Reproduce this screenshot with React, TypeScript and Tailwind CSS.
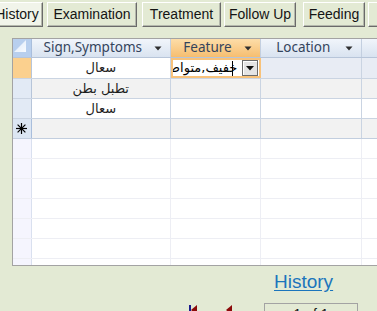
import React from 'react';

const tabs = [
  { label: 'History', w: 'w-[52px]', ml: 'ml-[-9px]', active: true },
  { label: 'Examination', w: 'w-[90px]', ml: 'ml-[4px]', active: false },
  { label: 'Treatment', w: 'w-[79px]', ml: 'ml-[5px]', active: false },
  { label: 'Follow Up', w: 'w-[72px]', ml: 'ml-[3px]', active: false },
  { label: 'Feeding', w: 'w-[62px]', ml: 'ml-[7px]', active: false },
  { label: 'Groups', w: 'w-[70px]', ml: 'ml-[3px]', active: false },
];

const rows = [
  { sign: 'سعال', bg: 'bg-white', sel: 'bg-[#FBD08E]', current: true },
  { sign: 'تطبل بطن', bg: 'bg-[#F2F2F2]', sel: 'bg-[#E2EAF5]', current: false },
  { sign: 'سعال', bg: 'bg-white', sel: 'bg-[#E2EAF5]', current: false },
];

function Arrow() {
  return (
    <svg width="8" height="5" viewBox="0 0 8 5" className="shrink-0">
      <path d="M0.5 0.5 H7.5 L4 4.5 Z" fill="#2E2E2E" />
    </svg>
  );
}

function HeaderCell({ label, w, active }: { label: string; w: string; active?: boolean }) {
  return (
    <div
      className={`${w} h-full flex items-center border-r border-[#C3CFE0] bg-gradient-to-b ${
        active ? 'from-[#FDDDA8] to-[#F6BE70]' : 'from-[#F1F5FB] to-[#D9E3F0]'
      }`}
    >
      <span className="flex-1 text-center pl-[2px] text-[13.5px] text-[#34445C] leading-none">{label}</span>
      <span className="w-[18px] flex justify-start pl-[2px]">
        <Arrow />
      </span>
    </div>
  );
}

function NavTriangle() {
  return (
    <svg width="6" height="10" viewBox="0 0 6 10">
      <path d="M6 0 L0 5 L6 10 Z" fill="#8B0A0A" />
    </svg>
  );
}

export default function App() {
  return (
    <div
      className="w-[377px] h-[311px] overflow-hidden bg-[#E3EAD4]"
      style={{ fontFamily: '"Liberation Sans", Arial, sans-serif' }}
    >
      {/* form tabs */}
      <div className="flex pt-[2px] h-[28px] whitespace-nowrap">
        {tabs.map((t) => (
          <div
            key={t.label}
            className={`${t.w} ${t.ml} shrink-0 h-[25px] flex items-center justify-center text-[14px] text-[#141414] border border-t-white border-l-white border-r-[#6A6A6A] border-b-[#6A6A6A] shadow-[inset_-1px_-1px_0_#B4B8AC] ${
              t.active ? 'bg-[#F1F4EA]' : 'bg-[#E3EAD4]'
            }`}
          >
            {t.label}
          </div>
        ))}
      </div>

      {/* datasheet */}
      <div
        className="ml-[12px] mt-[10px] w-[420px] h-[228px] flex flex-col overflow-hidden border-l border-t border-b border-[#A3A3A3] bg-white"
        style={{ fontFamily: '"Noto Sans", "DejaVu Sans", sans-serif' }}
      >
        {/* header */}
        <div className="flex h-[19px] border-b border-[#B7C5D9] shrink-0">
          <div className="w-[19px] h-full bg-[#B8CFEE] border-r border-[#A9BEDC] relative overflow-hidden">
            <svg width="18" height="18" viewBox="0 0 18 18" className="absolute right-[2px] bottom-[2px]">
              <defs>
                <linearGradient id="tri" x1="0" y1="0" x2="1" y2="1">
                  <stop offset="0" stopColor="#DCE8F8" />
                  <stop offset="1" stopColor="#F8FBFF" />
                </linearGradient>
              </defs>
              <path d="M15 3 V15 H3 Z" fill="url(#tri)" />
            </svg>
          </div>
          <HeaderCell label="Sign,Symptoms" w="w-[139px]" />
          <HeaderCell label="Feature" w="w-[91px]" active />
          <HeaderCell label="Location" w="w-[101px]" />
          <HeaderCell label="" w="w-[70px]" />
        </div>

        {/* data rows */}
        {rows.map((r, i) => (
          <div key={i} className={`flex shrink-0 ${i === 0 ? 'h-[21px]' : 'h-[20px]'} border-b border-[#CAD4E2] ${r.bg}`}>
            <div className={`w-[19px] h-full ${r.sel} border-r border-[#B7C5D9]`} />
            <div
              className="w-[139px] h-full border-r border-[#CAD4E2] flex items-center justify-center text-[13px] text-[#1E1E1E]"
              dir="rtl"
              style={{ fontFamily: '"DejaVu Sans", sans-serif' }}
            >
              {r.sign}
            </div>
            {r.current ? (
              <div className="w-[91px] h-full border-2 border-[#F8C27A] bg-white flex items-center overflow-hidden">
                <div
                  className="relative flex-1 h-full overflow-hidden flex items-center justify-start pr-[2px] text-[13px] text-black whitespace-nowrap"
                  dir="rtl"
                  style={{ fontFamily: '"DejaVu Sans", sans-serif' }}
                >
                  <span className="shrink-0">خفيف,متواصل</span>
                  <span className="absolute right-[6px] top-[1px] w-[1px] h-[16px] bg-black" />
                </div>
                <div className="w-[16px] h-[16px] shrink-0 ml-[3px] mr-[1px] border border-[#6B6B6B] bg-[#E4E4E4] shadow-[inset_1px_1px_0_#FFFFFF] flex items-center justify-center">
                  <svg width="8" height="5" viewBox="0 0 8 5">
                    <path d="M0 0 H8 L4 4.5 Z" fill="#111" />
                  </svg>
                </div>
              </div>
            ) : (
              <div className="w-[91px] h-full border-r border-[#CAD4E2]" />
            )}
            <div className={`w-[101px] h-full border-r border-[#CAD4E2] ${r.current ? 'bg-[#E8ECF4]' : ''}`} />
            <div className={`w-[70px] h-full ${r.current ? 'bg-[#E8ECF4]' : ''}`} />
          </div>
        ))}

        {/* new record row */}
        <div className="flex shrink-0 h-[20px] border-b border-[#C2CEDF] bg-[#F2F2F2]">
          <div className="w-[19px] h-full bg-[#DCE6F3] border-r border-[#A9BEDC] flex items-center justify-center">
            <svg width="13" height="13" viewBox="0 0 13 13">
              <g stroke="#000" strokeWidth="1.2">
                <path d="M6.5 1 V12" />
                <path d="M1 6.5 H12" />
                <path d="M2.6 2.6 L10.4 10.4" />
                <path d="M10.4 2.6 L2.6 10.4" />
              </g>
              <circle cx="6.5" cy="6.5" r="1.6" fill="#000" />
            </svg>
          </div>
          <div className="w-[139px] h-full border-r border-[#CAD4E2]" />
          <div className="w-[91px] h-full border-r border-[#CAD4E2]" />
          <div className="w-[101px] h-full border-r border-[#CAD4E2]" />
          <div className="w-[70px] h-full" />
        </div>

        {/* empty area */}
        {[0, 1, 2, 3, 4, 5, 6].map((k) => (
          <div key={k} className="flex shrink-0 h-[20px] border-b border-[#EDEEF4]">
            <div className="w-[19px] h-full bg-[#F5F5FE] border-r border-[#D9E0EF]" />
            <div className="w-[139px] h-full border-r border-[#EDEEF4]" />
            <div className="w-[91px] h-full border-r border-[#EDEEF4]" />
            <div className="w-[101px] h-full border-r border-[#EDEEF4]" />
            <div className="w-[70px] h-full" />
          </div>
        ))}
      </div>

      {/* link */}
      <div className="h-[30px] flex items-center">
        <a href="#" className="ml-[274px] text-[19px] leading-none text-[#1B75BC] underline underline-offset-2">
          History
        </a>
      </div>

      {/* navigation */}
      <div className="flex items-start h-[20px] mt-[7px]">
        <div className="ml-[189px] mt-[2px] flex items-start">
          <span className="w-[2px] h-[10px] bg-[#1A1A8C]" />
          <NavTriangle />
        </div>
        <div className="ml-[29px] mt-[2px] flex">
          <NavTriangle />
        </div>
        <div className="ml-[32px] w-[94px] h-[20px] border border-[#A3A3A3] bg-[#E3EAD4] flex justify-center pt-[3px] text-[14px] leading-none text-[#141414]">
          1 of 1
        </div>
      </div>
    </div>
  );
}
